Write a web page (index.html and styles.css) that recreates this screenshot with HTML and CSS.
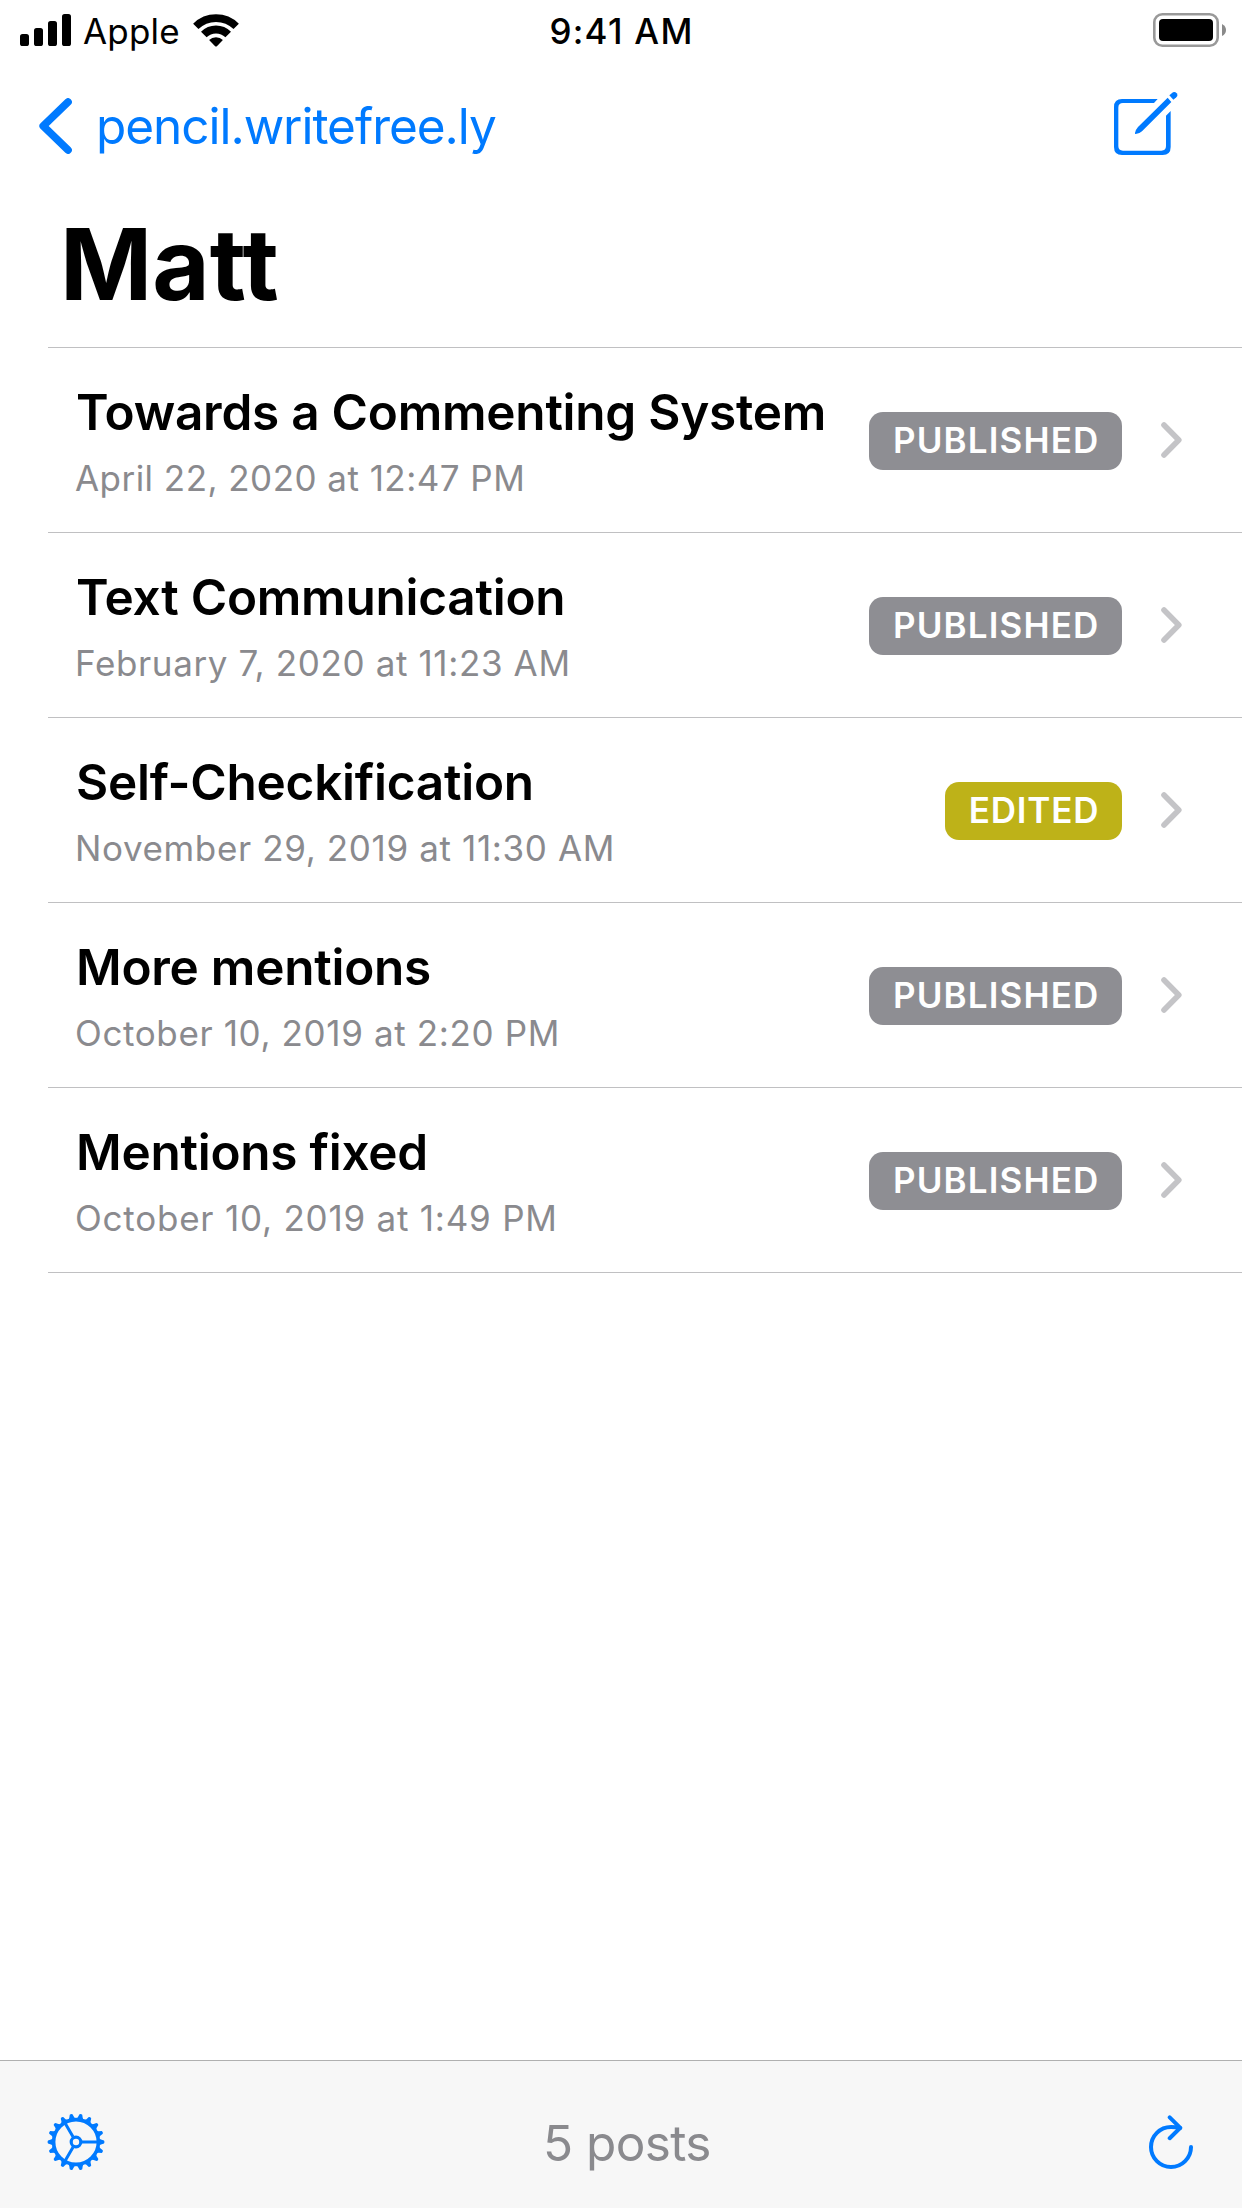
FILE: index.html
```
<!DOCTYPE html>
<html lang="en">
<head>
<meta charset="utf-8">
<title>Matt</title>
<link rel="stylesheet" href="styles.css">
</head>
<body>
<svg class="symbols" aria-hidden="true">
  <symbol id="disclosure" viewBox="0 0 21 36"><path d="M3 3l14.8 15L3 33" fill="none" stroke="currentColor" stroke-width="5.6" stroke-linecap="round" stroke-linejoin="round"/></symbol>
</svg>
<div class="screen">
  <header class="status">
    <div class="status-carrier">
      <svg class="signal" viewBox="0 0 51 32"><rect x="0" y="20" width="9" height="12" rx="2.6"/><rect x="14" y="14" width="9" height="18" rx="2.6"/><rect x="28" y="7" width="9" height="25" rx="2.6"/><rect x="42" y="0" width="9" height="32" rx="2.6"/></svg>
      <span>Apple</span>
      <svg class="wifi" viewBox="-23 -33 46 33"><g fill="none" stroke="#000"><path d="M-20.2-20.6a28.8 28.8 0 0 1 40.4 0" stroke-width="7.6"/><path d="M-12.2-12.5a17.5 17.5 0 0 1 24.4 0" stroke-width="8"/></g><path d="M-6.9-6.9a9.8 9.8 0 0 1 13.8 0L.9-.8q-.9.8-1.8 0z"/></svg>
    </div>
    <div class="status-time">9:41 AM</div>
    <svg class="battery" viewBox="0 0 73 34"><rect x="1.3" y="1.3" width="63.4" height="31.4" rx="8" fill="none" stroke="#999" stroke-width="2.6"/><rect x="6" y="6" width="54" height="22" rx="4"/><path d="M69 11q4 2 4 6t-4 6z" fill="#8a8a8a"/></svg>
  </header>

  <nav class="nav">
    <a class="back">
      <svg class="back-icon" viewBox="0 0 33 56"><path d="M29 4L4.2 28 29 52" fill="none" stroke="currentColor" stroke-width="7.6" stroke-linecap="round" stroke-linejoin="round"/></svg>
      <span>pencil.writefree.ly</span>
    </a>
    <svg class="compose" viewBox="42 33 192 192"><path d="M173 57H66Q42 57 42 81V201Q42 225 66 225H188Q212 225 212 201V93L198 107V198Q198 212 184 212H69Q55 212 55 198V83Q55 69 69 69H162z"/><path d="M203 53L214 66 126 154Q120 160 107 162 104 162 105 159 108 147 114 141z"/><path d="M208 46l11-9q6-3 11 3 5 6-1 12l-9 7z"/></svg>
  </nav>

  <h1 class="title">Matt</h1>

  <main class="posts">
    <article class="post">
      <div class="post-text"><h2>Towards a Commenting System</h2><p class="date-tight">April 22, 2020 at 12:47 PM</p></div>
      <span class="badge">PUBLISHED</span><svg class="chevron"><use href="#disclosure"/></svg>
    </article>
    <article class="post">
      <div class="post-text"><h2>Text Communication</h2><p>February 7, 2020 at 11:23 AM</p></div>
      <span class="badge">PUBLISHED</span><svg class="chevron"><use href="#disclosure"/></svg>
    </article>
    <article class="post">
      <div class="post-text"><h2>Self-Checkification</h2><p>November 29, 2019 at 11:30 AM</p></div>
      <span class="badge badge-edited">EDITED</span><svg class="chevron"><use href="#disclosure"/></svg>
    </article>
    <article class="post">
      <div class="post-text"><h2>More mentions</h2><p>October 10, 2019 at 2:20 PM</p></div>
      <span class="badge">PUBLISHED</span><svg class="chevron"><use href="#disclosure"/></svg>
    </article>
    <article class="post">
      <div class="post-text"><h2>Mentions fixed</h2><p class="date-loose">October 10, 2019 at 1:49 PM</p></div>
      <span class="badge">PUBLISHED</span><svg class="chevron"><use href="#disclosure"/></svg>
    </article>
  </main>

  <footer class="toolbar">
    <svg class="gear" viewBox="-29 -29 58 58">
      <defs><path id="tooth" d="M23-3.6L25-2.4 28-1.4Q29 0 28 1.4L25 2.4 23 3.6z"/>
      <g id="teeth"><use href="#tooth"/><use href="#tooth" transform="rotate(20)"/><use href="#tooth" transform="rotate(40)"/><use href="#tooth" transform="rotate(60)"/><use href="#tooth" transform="rotate(80)"/><use href="#tooth" transform="rotate(100)"/></g></defs>
      <use href="#teeth"/><use href="#teeth" transform="rotate(120)"/><use href="#teeth" transform="rotate(240)"/>
      <g fill="none" stroke="currentColor"><circle r="22.4" stroke-width="3.6"/><circle r="4.8" stroke-width="3.2"/><path d="M6 0H22M-3-5.2L-11-19M-3 5.2L-11 19" stroke-width="3"/></g>
    </svg>
    <span class="count">5 posts</span>
    <svg class="refresh" viewBox="0 0 44 54" fill="none" stroke="currentColor" stroke-width="4" stroke-linecap="round" stroke-linejoin="round"><path d="M42 32A20 20 0 1 1 22 12Q27 12 31 13"/><path d="M20.7 2.3L31.3 12.8 20.7 23.2"/></svg>
  </footer>
</div>
</body>
</html>
```
FILE: styles.css
```
* { box-sizing: border-box; margin: 0; padding: 0; }
body { background: #fff; color: #000; font-family: Inter, "Liberation Sans", sans-serif; }
svg { display: block; flex: none; }
.symbols { display: none; }

.screen { display: flex; flex-direction: column; width: 1242px; height: 2208px; overflow: hidden; }

.status { display: grid; grid-template-columns: 1fr auto 1fr; align-items: center; height: 60px; padding: 0 16px 0 20px; font-size: 35px; line-height: 42px; white-space: nowrap; }
.status-carrier { display: flex; align-items: center; }
.status-carrier span { margin: 2px 0 0 12px; letter-spacing: 0.2px; }
.signal { width: 51px; height: 32px; }
.wifi { width: 46px; height: 33px; margin-left: 13px; }
.status-time { margin: 2px 3px 0 0; font-weight: 500; letter-spacing: 1.27px; }
.battery { justify-self: end; width: 73px; height: 34px; }

.nav { display: flex; align-items: center; justify-content: space-between; height: 132px; padding: 0 64px 0 39px; color: #007aff; }
.back { display: flex; align-items: center; gap: 24px; font-size: 49.5px; line-height: 60px; letter-spacing: -1.04px; }
.back-icon { width: 33px; height: 56px; }
.compose { width: 64px; height: 64px; margin-bottom: 6px; fill: currentColor; }

.title { height: 155px; padding: 12px 0 0 60px; font-size: 99px; line-height: 120px; font-weight: 700; letter-spacing: 0; font-variant-ligatures: none; font-feature-settings: "calt" 0; }

.posts { flex: 1; margin-left: 48px; border-top: 1px solid #c0c0c2; }
.post { display: flex; align-items: center; height: 185px; padding: 0 60px 0 28px; border-bottom: 1px solid #c0c0c2; }
.post-text { flex: 1; align-self: flex-start; padding-top: 34px; white-space: nowrap; }
.post h2 { font-size: 49.5px; line-height: 60px; font-weight: 600; letter-spacing: -0.25px; }
.post p { margin: 15px 0 0 -1px; color: #8a8a8e; font-size: 35px; line-height: 42px; letter-spacing: 0.63px; }
.post .date-tight { letter-spacing: 0.46px; }
.post .date-loose { letter-spacing: 0.78px; }
.badge { height: 58px; margin-top: 2px; padding: 7px 22.5px 9px 24px; border-radius: 14px; background: #8e8e93; color: #fff; font-size: 35px; line-height: 42px; font-weight: 600; letter-spacing: 1.15px; }
.badge-edited { background: #beb218; letter-spacing: 0.85px; }
.chevron { width: 21px; height: 36px; margin-left: 39px; color: #c4c4c7; }

.toolbar { display: flex; align-items: center; justify-content: space-between; height: 148px; padding: 17px 49px 0 47px; border-top: 1px solid #b0b0b0; background: #f7f7f7; color: #007aff; }
.gear { width: 58px; height: 58px; margin-bottom: 2px; fill: currentColor; }
.count { color: #8a8a8e; font-size: 49.5px; line-height: 60px; letter-spacing: -0.6px; }
.refresh { width: 44px; height: 54px; margin-bottom: 2px; }
```
